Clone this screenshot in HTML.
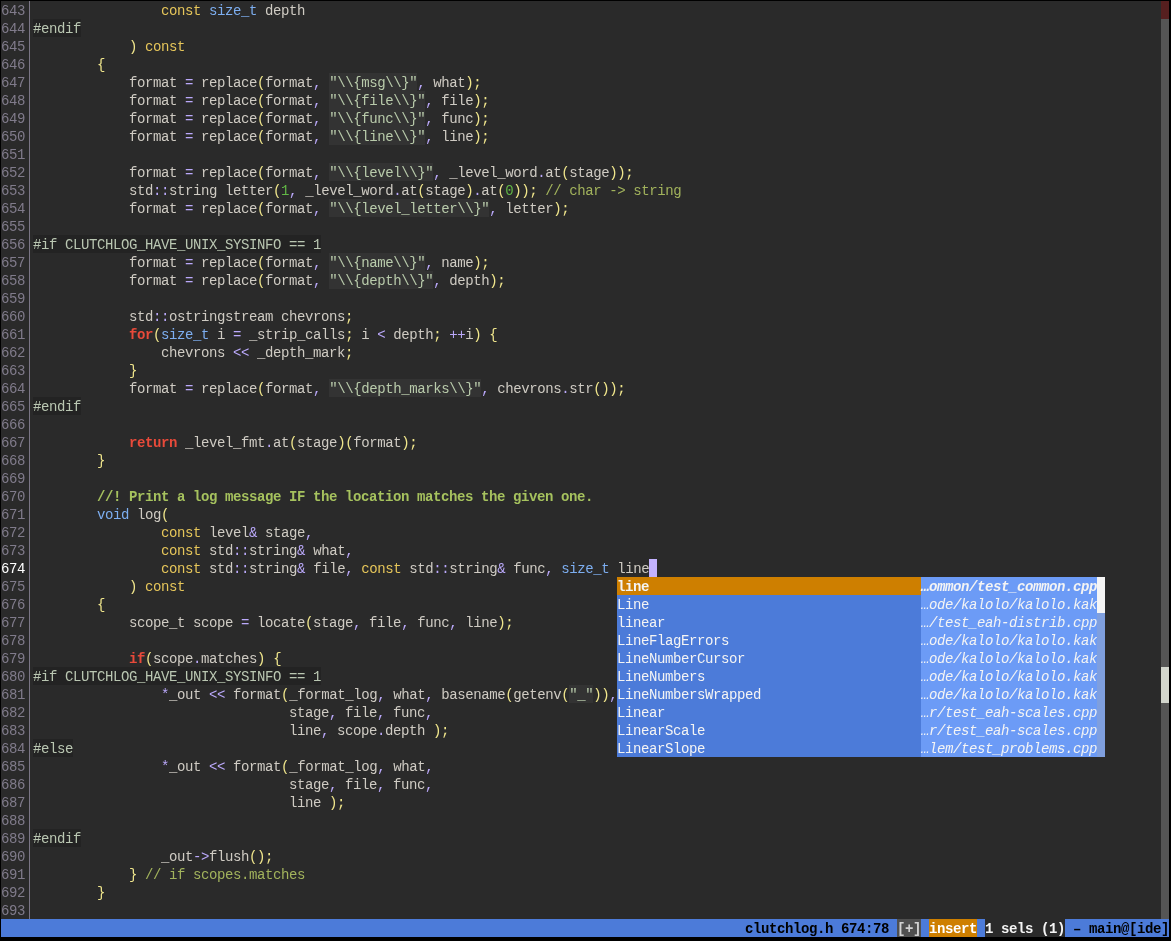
<!DOCTYPE html>
<html><head><meta charset="utf-8">
<style>
html,body{margin:0;padding:0;}
body{width:1171px;height:941px;background:#000;position:relative;overflow:hidden;
 font-family:"Liberation Mono",monospace;font-size:14px;letter-spacing:-0.4013px;}
#ed{will-change:transform;position:absolute;left:1px;top:1px;width:1168px;height:918px;background:#2a2a2a;overflow:hidden;}
.r{position:absolute;left:0;height:18px;line-height:20px;white-space:pre;color:#cfcbc3;width:1160px;}
.r>*,.r{}
.ln{color:#807b8b;}
.ln.cur{color:#ffffff;}
#sep{position:absolute;left:28px;top:0;width:1px;height:918px;background:#7a7585;}
.k{color:#e6c65a;}
.t{color:#7daef0;}
.r .r{}
.rd,.rr{}
span.r{}
.kw{}
.p{color:#bba9fb;}
.y{color:#f0e68c;}
.n{color:#62b846;}
.s{color:#b9cbab;}
.bgs,.bgpp{position:absolute;height:18px;}
.bgs{background:#333333;}
.bgpp{background:#232323;}
.c{color:#a2b35c;}
.d{color:#a6c25e;font-weight:bold;}
.pp{color:#bac7b2;}
.red{color:#e84a3a;font-weight:bold;}
#sb{position:absolute;left:1160px;top:0;width:8px;height:918px;background:#555555;}
#sbred{position:absolute;left:1160px;top:0;width:8px;height:18px;background:#561f1f;}
#sbth{position:absolute;left:1160px;top:666px;width:8px;height:36px;background:#d3d6cd;}
#cur{position:absolute;left:648px;top:558px;width:8px;height:18px;background:#c3b2ff;}
#menu{position:absolute;left:616px;top:576px;width:488px;height:180px;}
.mr{position:absolute;left:0;width:488px;height:18px;line-height:20px;white-space:pre;color:#f4f4f4;}
.ma{position:absolute;left:0;top:0;width:304px;height:18px;background:#4c7bd9;}
.mb{position:absolute;left:304px;top:0;width:176px;height:18px;background:#6c9bf6;font-style:italic;}
.msb{position:absolute;left:480px;top:0;width:8px;height:18px;background:#7f9fde;}
.msb.sbt{background:#f5f5f5;}
.sel .ma{background:#ce7f00;font-weight:bold;}
.sel .mb{font-weight:bold;}
#st{will-change:transform;position:absolute;left:1px;top:919px;width:1168px;height:18px;background:#4c7bd9;line-height:20px;white-space:pre;}
#st span{position:absolute;top:0;height:18px;}
</style></head><body>
<div id="ed">
<div id="sep"></div>
<div class="bgpp" style="top:18px;left:32px;width:48px"></div>
<div class="bgs" style="top:72px;left:328px;width:88px"></div>
<div class="bgs" style="top:90px;left:328px;width:96px"></div>
<div class="bgs" style="top:108px;left:328px;width:96px"></div>
<div class="bgs" style="top:126px;left:328px;width:96px"></div>
<div class="bgs" style="top:162px;left:328px;width:104px"></div>
<div class="bgs" style="top:198px;left:328px;width:160px"></div>
<div class="bgpp" style="top:234px;left:32px;width:288px"></div>
<div class="bgs" style="top:252px;left:328px;width:96px"></div>
<div class="bgs" style="top:270px;left:328px;width:104px"></div>
<div class="bgs" style="top:378px;left:328px;width:152px"></div>
<div class="bgpp" style="top:396px;left:32px;width:48px"></div>
<div class="bgpp" style="top:666px;left:32px;width:288px"></div>
<div class="bgs" style="top:684px;left:568px;width:24px"></div>
<div class="bgpp" style="top:738px;left:32px;width:40px"></div>
<div class="bgpp" style="top:828px;left:32px;width:48px"></div>
<div class="r" style="top:0px"><span class="ln">643</span>                 <span class="k">const</span> <span class="t">size_t</span> depth</div>
<div class="r" style="top:18px"><span class="ln">644</span> <span class="pp">#endif</span></div>
<div class="r" style="top:36px"><span class="ln">645</span>             <span class="y">)</span> <span class="k">const</span></div>
<div class="r" style="top:54px"><span class="ln">646</span>         <span class="y">{</span></div>
<div class="r" style="top:72px"><span class="ln">647</span>             format <span class="p">=</span> replace<span class="y">(</span>format<span class="p">,</span> <span class="s">&quot;\\{msg\\}&quot;</span><span class="p">,</span> what<span class="y">)</span><span class="y">;</span></div>
<div class="r" style="top:90px"><span class="ln">648</span>             format <span class="p">=</span> replace<span class="y">(</span>format<span class="p">,</span> <span class="s">&quot;\\{file\\}&quot;</span><span class="p">,</span> file<span class="y">)</span><span class="y">;</span></div>
<div class="r" style="top:108px"><span class="ln">649</span>             format <span class="p">=</span> replace<span class="y">(</span>format<span class="p">,</span> <span class="s">&quot;\\{func\\}&quot;</span><span class="p">,</span> func<span class="y">)</span><span class="y">;</span></div>
<div class="r" style="top:126px"><span class="ln">650</span>             format <span class="p">=</span> replace<span class="y">(</span>format<span class="p">,</span> <span class="s">&quot;\\{line\\}&quot;</span><span class="p">,</span> line<span class="y">)</span><span class="y">;</span></div>
<div class="r" style="top:144px"><span class="ln">651</span> </div>
<div class="r" style="top:162px"><span class="ln">652</span>             format <span class="p">=</span> replace<span class="y">(</span>format<span class="p">,</span> <span class="s">&quot;\\{level\\}&quot;</span><span class="p">,</span> _level_word<span class="p">.</span>at<span class="y">(</span>stage<span class="y">)</span><span class="y">)</span><span class="y">;</span></div>
<div class="r" style="top:180px"><span class="ln">653</span>             std<span class="p">:</span><span class="p">:</span>string letter<span class="y">(</span><span class="n">1</span><span class="p">,</span> _level_word<span class="p">.</span>at<span class="y">(</span>stage<span class="y">)</span><span class="p">.</span>at<span class="y">(</span><span class="n">0</span><span class="y">)</span><span class="y">)</span><span class="y">;</span> <span class="c">// char -&gt; string</span></div>
<div class="r" style="top:198px"><span class="ln">654</span>             format <span class="p">=</span> replace<span class="y">(</span>format<span class="p">,</span> <span class="s">&quot;\\{level_letter\\}&quot;</span><span class="p">,</span> letter<span class="y">)</span><span class="y">;</span></div>
<div class="r" style="top:216px"><span class="ln">655</span> </div>
<div class="r" style="top:234px"><span class="ln">656</span> <span class="pp">#if CLUTCHLOG_HAVE_UNIX_SYSINFO == 1</span></div>
<div class="r" style="top:252px"><span class="ln">657</span>             format <span class="p">=</span> replace<span class="y">(</span>format<span class="p">,</span> <span class="s">&quot;\\{name\\}&quot;</span><span class="p">,</span> name<span class="y">)</span><span class="y">;</span></div>
<div class="r" style="top:270px"><span class="ln">658</span>             format <span class="p">=</span> replace<span class="y">(</span>format<span class="p">,</span> <span class="s">&quot;\\{depth\\}&quot;</span><span class="p">,</span> depth<span class="y">)</span><span class="y">;</span></div>
<div class="r" style="top:288px"><span class="ln">659</span> </div>
<div class="r" style="top:306px"><span class="ln">660</span>             std<span class="p">:</span><span class="p">:</span>ostringstream chevrons<span class="y">;</span></div>
<div class="r" style="top:324px"><span class="ln">661</span>             <span class="red">for</span><span class="y">(</span><span class="t">size_t</span> i <span class="p">=</span> _strip_calls<span class="y">;</span> i <span class="p">&lt;</span> depth<span class="y">;</span> <span class="p">+</span><span class="p">+</span>i<span class="y">)</span> <span class="y">{</span></div>
<div class="r" style="top:342px"><span class="ln">662</span>                 chevrons <span class="p">&lt;</span><span class="p">&lt;</span> _depth_mark<span class="y">;</span></div>
<div class="r" style="top:360px"><span class="ln">663</span>             <span class="y">}</span></div>
<div class="r" style="top:378px"><span class="ln">664</span>             format <span class="p">=</span> replace<span class="y">(</span>format<span class="p">,</span> <span class="s">&quot;\\{depth_marks\\}&quot;</span><span class="p">,</span> chevrons<span class="p">.</span>str<span class="y">(</span><span class="y">)</span><span class="y">)</span><span class="y">;</span></div>
<div class="r" style="top:396px"><span class="ln">665</span> <span class="pp">#endif</span></div>
<div class="r" style="top:414px"><span class="ln">666</span> </div>
<div class="r" style="top:432px"><span class="ln">667</span>             <span class="red">return</span> _level_fmt<span class="p">.</span>at<span class="y">(</span>stage<span class="y">)</span><span class="y">(</span>format<span class="y">)</span><span class="y">;</span></div>
<div class="r" style="top:450px"><span class="ln">668</span>         <span class="y">}</span></div>
<div class="r" style="top:468px"><span class="ln">669</span> </div>
<div class="r" style="top:486px"><span class="ln">670</span>         <span class="d">//! Print a log message IF the location matches the given one.</span></div>
<div class="r" style="top:504px"><span class="ln">671</span>         <span class="t">void</span> log<span class="y">(</span></div>
<div class="r" style="top:522px"><span class="ln">672</span>                 <span class="k">const</span> level<span class="p">&amp;</span> stage<span class="p">,</span></div>
<div class="r" style="top:540px"><span class="ln">673</span>                 <span class="k">const</span> std<span class="p">:</span><span class="p">:</span>string<span class="p">&amp;</span> what<span class="p">,</span></div>
<div class="r" style="top:558px"><span class="ln cur">674</span>                 <span class="k">const</span> std<span class="p">:</span><span class="p">:</span>string<span class="p">&amp;</span> file<span class="p">,</span> <span class="k">const</span> std<span class="p">:</span><span class="p">:</span>string<span class="p">&amp;</span> func<span class="p">,</span> <span class="t">size_t</span> line</div>
<div class="r" style="top:576px"><span class="ln">675</span>             <span class="y">)</span> <span class="k">const</span></div>
<div class="r" style="top:594px"><span class="ln">676</span>         <span class="y">{</span></div>
<div class="r" style="top:612px"><span class="ln">677</span>             scope_t scope <span class="p">=</span> locate<span class="y">(</span>stage<span class="p">,</span> file<span class="p">,</span> func<span class="p">,</span> line<span class="y">)</span><span class="y">;</span></div>
<div class="r" style="top:630px"><span class="ln">678</span> </div>
<div class="r" style="top:648px"><span class="ln">679</span>             <span class="red">if</span><span class="y">(</span>scope<span class="p">.</span>matches<span class="y">)</span> <span class="y">{</span></div>
<div class="r" style="top:666px"><span class="ln">680</span> <span class="pp">#if CLUTCHLOG_HAVE_UNIX_SYSINFO == 1</span></div>
<div class="r" style="top:684px"><span class="ln">681</span>                 <span class="p">*</span>_out <span class="p">&lt;</span><span class="p">&lt;</span> format<span class="y">(</span>_format_log<span class="p">,</span> what<span class="p">,</span> basename<span class="y">(</span>getenv<span class="y">(</span><span class="s">&quot;_&quot;</span><span class="y">)</span><span class="y">)</span><span class="p">,</span></div>
<div class="r" style="top:702px"><span class="ln">682</span>                                 stage<span class="p">,</span> file<span class="p">,</span> func<span class="p">,</span></div>
<div class="r" style="top:720px"><span class="ln">683</span>                                 line<span class="p">,</span> scope<span class="p">.</span>depth <span class="y">)</span><span class="y">;</span></div>
<div class="r" style="top:738px"><span class="ln">684</span> <span class="pp">#else</span></div>
<div class="r" style="top:756px"><span class="ln">685</span>                 <span class="p">*</span>_out <span class="p">&lt;</span><span class="p">&lt;</span> format<span class="y">(</span>_format_log<span class="p">,</span> what<span class="p">,</span></div>
<div class="r" style="top:774px"><span class="ln">686</span>                                 stage<span class="p">,</span> file<span class="p">,</span> func<span class="p">,</span></div>
<div class="r" style="top:792px"><span class="ln">687</span>                                 line <span class="y">)</span><span class="y">;</span></div>
<div class="r" style="top:810px"><span class="ln">688</span> </div>
<div class="r" style="top:828px"><span class="ln">689</span> <span class="pp">#endif</span></div>
<div class="r" style="top:846px"><span class="ln">690</span>                 _out<span class="p">-</span><span class="p">&gt;</span>flush<span class="y">(</span><span class="y">)</span><span class="y">;</span></div>
<div class="r" style="top:864px"><span class="ln">691</span>             <span class="y">}</span> <span class="c">// if scopes.matches</span></div>
<div class="r" style="top:882px"><span class="ln">692</span>         <span class="y">}</span></div>
<div class="r" style="top:900px"><span class="ln">693</span> </div>
<div id="sb"></div><div id="sbred"></div><div id="sbth"></div>
<div id="cur"></div>
<div id="menu">
<div class="mr sel" style="top:0px"><span class="ma">line</span><span class="mb">…ommon/test_common.cpp</span><span class="msb sbt"></span></div>
<div class="mr" style="top:18px"><span class="ma">Line</span><span class="mb">…ode/kalolo/kalolo.kak</span><span class="msb sbt"></span></div>
<div class="mr" style="top:36px"><span class="ma">linear</span><span class="mb">…/test_eah-distrib.cpp</span><span class="msb"></span></div>
<div class="mr" style="top:54px"><span class="ma">LineFlagErrors</span><span class="mb">…ode/kalolo/kalolo.kak</span><span class="msb"></span></div>
<div class="mr" style="top:72px"><span class="ma">LineNumberCursor</span><span class="mb">…ode/kalolo/kalolo.kak</span><span class="msb"></span></div>
<div class="mr" style="top:90px"><span class="ma">LineNumbers</span><span class="mb">…ode/kalolo/kalolo.kak</span><span class="msb"></span></div>
<div class="mr" style="top:108px"><span class="ma">LineNumbersWrapped</span><span class="mb">…ode/kalolo/kalolo.kak</span><span class="msb"></span></div>
<div class="mr" style="top:126px"><span class="ma">Linear</span><span class="mb">…r/test_eah-scales.cpp</span><span class="msb"></span></div>
<div class="mr" style="top:144px"><span class="ma">LinearScale</span><span class="mb">…r/test_eah-scales.cpp</span><span class="msb"></span></div>
<div class="mr" style="top:162px"><span class="ma">LinearSlope</span><span class="mb">…lem/test_problems.cpp</span><span class="msb"></span></div>
</div>
</div>
<div id="st">
<span style="left:744px;width:152px;color:#000;font-weight:bold">clutchlog.h 674:78</span>
<span style="left:896px;width:24px;background:#4f4f4f;color:#d2d2d2;font-weight:bold">[+]</span>
<span style="left:928px;width:48px;background:#ce7f00;color:#fff;font-weight:bold">insert</span>
<span style="left:984px;width:80px;background:#2a2a2a;color:#f4f4f4;font-weight:bold">1 sels (1)</span>
<span style="left:1064px;width:104px;color:#000;font-weight:bold"> – main@[ide]</span>
</div>
</body></html>
